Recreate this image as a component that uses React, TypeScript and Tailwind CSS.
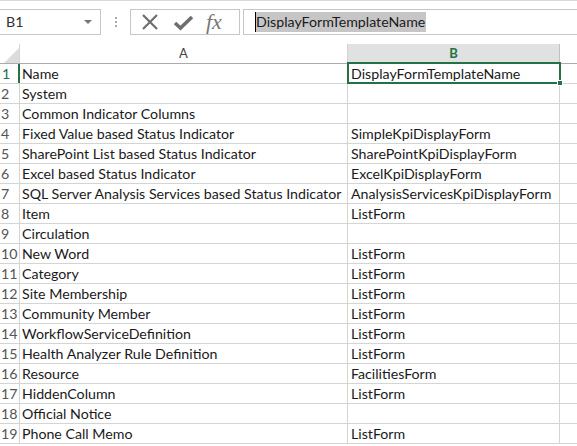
const rows: [string, string][] = [
  ["Name", "DisplayFormTemplateName"],
  ["System", ""],
  ["Common Indicator Columns", ""],
  ["Fixed Value based Status Indicator", "SimpleKpiDisplayForm"],
  ["SharePoint List based Status Indicator", "SharePointKpiDisplayForm"],
  ["Excel based Status Indicator", "ExcelKpiDisplayForm"],
  ["SQL Server Analysis Services based Status Indicator", "AnalysisServicesKpiDisplayForm"],
  ["Item", "ListForm"],
  ["Circulation", ""],
  ["New Word", "ListForm"],
  ["Category", "ListForm"],
  ["Site Membership", "ListForm"],
  ["Community Member", "ListForm"],
  ["WorkflowServiceDefinition", "ListForm"],
  ["Health Analyzer Rule Definition", "ListForm"],
  ["Resource", "FacilitiesForm"],
  ["HiddenColumn", "ListForm"],
  ["Official Notice", ""],
  ["Phone Call Memo", "ListForm"],
]

const font = { fontFamily: "Lato, 'Open Sans', sans-serif" }

export default function App() {
  return (
    <div className="relative w-[577px] h-[446px] overflow-hidden bg-white text-[14.2px] text-[#1a1a1a]" style={font}>
      {/* formula bar */}
      <div className="flex items-start h-[44px] pt-[8px] border-t border-[#dadada]">
        <div className="-ml-px w-[102px] h-[26px] border border-[#c6c6c6] flex items-center justify-between pl-[6px] pr-[8px]">
          <span className="text-[#333]">B1</span>
          <span className="w-0 h-0 border-l-[4px] border-r-[4px] border-t-[4px] border-l-transparent border-r-transparent border-t-[#777]" />
        </div>
        <div className="w-[29px] h-[26px] flex flex-col items-center justify-center gap-[2px]">
          <span className="w-[2px] h-[2px] bg-[#aaa]" />
          <span className="w-[2px] h-[2px] bg-[#aaa]" />
          <span className="w-[2px] h-[2px] bg-[#aaa]" />
        </div>
        <div className="w-[110px] h-[26px] border border-[#c6c6c6] flex items-center pl-[10px]">
          <svg width="18" height="18" viewBox="0 0 18 18" className="shrink-0">
            <path d="M2 2 L16 16 M16 2 L2 16" stroke="#6e6e6e" strokeWidth="2.2" />
          </svg>
          <svg width="21" height="17" viewBox="0 0 21 17" className="ml-[14px] shrink-0">
            <path d="M2 9 L7.5 14 L19 3" stroke="#6e6e6e" strokeWidth="3.6" fill="none" />
          </svg>
          <span
            className="ml-[12px] text-[22px] italic leading-none text-[#777]"
            style={{ fontFamily: "'Liberation Serif', serif" }}
          >
            fx
          </span>
        </div>
        <div className="ml-[3px] flex-1 h-[26px] border border-r-0 border-[#c6c6c6] flex items-center pl-[11px]">
          <span className="border-l border-black bg-[#c6c6c6] leading-[20px] pr-[1px]">DisplayFormTemplateName</span>
        </div>
      </div>

      {/* column headers */}
      <div className="flex h-[20px] border-b border-[#ababab] text-[13px] text-[#444]">
        <div className="w-[20px] border-r border-[#d4d4d4] flex items-end justify-end">
          <div className="w-0 h-0" style={{ borderBottom: "15px solid #dcdcdc", borderLeft: "15px solid transparent" }} />
        </div>
        <div className="w-[328px] border-r border-[#d4d4d4] flex items-center justify-center">A</div>
        <div className="w-[212px] bg-[#e1e1e1] border-r border-[#c0c0c0] flex items-center justify-center font-bold text-[#217346]">B</div>
        <div className="flex-1" />
      </div>

      {/* rows */}
      {rows.map(([a, b], i) => (
        <div key={i} className="flex h-[20px] border-b border-[#d4d4d4]">
          <div
            className={
              i === 0
                ? "w-[20px] border-r-2 border-[#217346] pl-[2px] text-[#217346] leading-[19px]"
                : "w-[20px] border-r border-[#d4d4d4] pl-[1px] text-[#555] leading-[19px]"
            }
          >
            {i + 1}
          </div>
          <div className="w-[328px] border-r border-[#d4d4d4] pl-[2px] leading-[19px] whitespace-nowrap overflow-hidden">{a}</div>
          <div className="w-[212px] border-r border-[#d4d4d4] pl-[3px] leading-[19px] whitespace-nowrap overflow-hidden">{b}</div>
          <div className="flex-1" />
        </div>
      ))}

      {/* active cell */}
      <div className="absolute left-[347px] top-[62px] w-[214px] h-[22px] border-2 border-[#217346]" />
      <div className="absolute left-[557px] top-[80px] w-[6px] h-[6px] bg-[#217346] border border-white" />
    </div>
  )
}
